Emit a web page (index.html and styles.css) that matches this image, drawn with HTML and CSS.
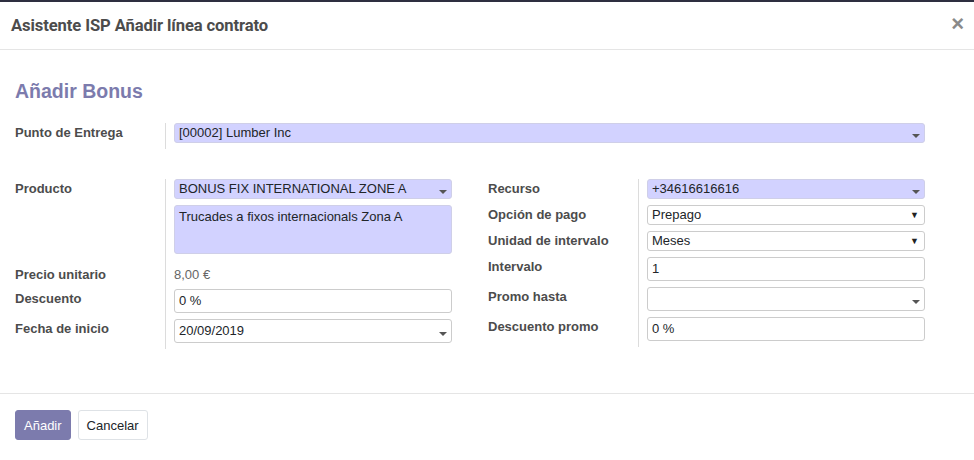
FILE: index.html
```html
<!DOCTYPE html>
<html lang="es">
<head>
<meta charset="utf-8">
<title>Asistente ISP Añadir línea contrato</title>
<link rel="stylesheet" href="styles.css">
</head>
<body>
<div class="modal">
  <header class="modal-header">
    <h4 class="modal-title">Asistente ISP Añadir línea contrato</h4>
    <span class="close">×</span>
  </header>
  <main class="modal-body">
    <h2 class="section-title">Añadir Bonus</h2>
    <div class="group full">
      <div class="label">Punto de Entrega</div>
      <div class="cell"><div class="field req m2o">[00002] Lumber Inc<span class="caret"></span></div></div>
    </div>
    <div class="two-cols">
      <div class="group">
        <div class="label">Producto</div>
        <div class="cell"><div class="field req m2o">BONUS FIX INTERNATIONAL ZONE A<span class="caret"></span></div></div>
        <div class="label"></div>
        <div class="cell"><div class="field req area">Trucades a fixos internacionals Zona A</div></div>
        <div class="label lbl-price">Precio unitario</div>
        <div class="cell"><div class="readonly">8,00 €</div></div>
        <div class="label">Descuento</div>
        <div class="cell"><div class="field tall">0 %</div></div>
        <div class="label">Fecha de inicio</div>
        <div class="cell"><div class="field tall m2o">20/09/2019<span class="caret"></span></div></div>
      </div>
      <div class="group">
        <div class="label">Recurso</div>
        <div class="cell"><div class="field req m2o">+34616616616<span class="caret"></span></div></div>
        <div class="label">Opción de pago</div>
        <div class="cell"><div class="field sel">Prepago<span class="tri">▼</span></div></div>
        <div class="label">Unidad de intervalo</div>
        <div class="cell"><div class="field sel">Meses<span class="tri">▼</span></div></div>
        <div class="label">Intervalo</div>
        <div class="cell"><div class="field tall">1</div></div>
        <div class="label">Promo hasta</div>
        <div class="cell"><div class="field tall m2o"><span class="caret"></span></div></div>
        <div class="label">Descuento promo</div>
        <div class="cell"><div class="field tall">0 %</div></div>
      </div>
    </div>
  </main>
  <footer class="modal-footer">
    <button class="btn primary">Añadir</button>
    <button class="btn secondary">Cancelar</button>
  </footer>
</div>
</body>
</html>
```

FILE: styles.css
```css
* { box-sizing: border-box; }
html, body { margin: 0; padding: 0; background: #fff; }
body {
  font-family: "Liberation Sans", Arial, sans-serif;
  font-size: 13px;
  color: #212529;
}
.modal { width: 974px; height: 460px; border-top: 2px solid #2e2f40; }
.modal-header {
  height: 48px;
  border-bottom: 1px solid #e5e5e5;
  display: flex;
  align-items: center;
  justify-content: space-between;
  padding: 0 10px 0 11px;
}
.modal-title {
  margin: 0;
  font-family: Roboto, "Liberation Sans", sans-serif;
  font-weight: 700;
  font-size: 16.6px;
  color: #4c4c4c;
  letter-spacing: -0.1px;
}
.close {
  font-family: "Liberation Sans", sans-serif;
  font-size: 22px;
  font-weight: 700;
  color: #8a8a8a;
  position: relative;
  top: -2px;
}
.modal-body { padding: 29px 15px 44px; }
.section-title {
  margin: 0 0 20px;
  font-size: 19.5px;
  font-weight: 700;
  color: #7c7bad;
  line-height: 24px;
}
.group {
  display: grid;
  grid-template-columns: 150px 1fr;
  align-content: start;
  width: 437px;
}
.group.full { width: 910px; margin-bottom: 30px; }
.two-cols { display: flex; gap: 36px; align-items: flex-start; }
.label {
  font-weight: 700;
  color: #4c4c4c;
  line-height: 18px;
  padding-top: 1px;
}
.cell {
  border-left: 1px solid #dcdcdc;
  padding: 0 0 6px 8px;
}
.field {
  position: relative;
  height: 20px;
  line-height: 18px;
  border: 1px solid #ccc;
  border-radius: 3px;
  padding: 0 4px;
  background: #fff;
  white-space: nowrap;
}
.field.req { background: #d2d2ff; border-color: #cfcfe8; }
.field.tall { height: 24px; line-height: 22px; }
.field.area { height: 49px; padding-top: 2px; }
.caret {
  position: absolute;
  right: 4px;
  top: 55%;
  width: 0; height: 0;
  border-left: 4px solid transparent;
  border-right: 4px solid transparent;
  border-top: 4px solid #555;
}
.tri {
  position: absolute;
  right: 5px;
  top: 0;
  font-size: 9px;
  color: #222;
}
.readonly {
  color: #666;
  line-height: 18px;
  padding-top: 5px;
  position: relative;
  top: 1px;
}
.lbl-price { padding-top: 6px; }
.modal-footer {
  border-top: 1px solid #e5e5e5;
  padding: 16px 15px;
  display: flex;
  gap: 7px;
}
.btn {
  font-family: "Liberation Sans", Arial, sans-serif;
  font-size: 13px;
  height: 30px;
  border-radius: 3px;
  padding: 0 8px;
  cursor: pointer;
}
.btn.primary { background: #7c7bad; border: 1px solid #7c7bad; color: #fff; }
.btn.secondary { background: #fff; border: 1px solid #dee2e6; color: #212529; }
```
